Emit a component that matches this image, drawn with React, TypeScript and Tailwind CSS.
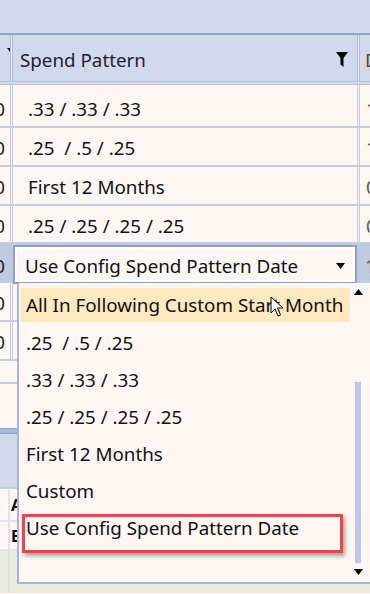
import React from "react";

const font = { fontFamily: '"Noto Sans", "Open Sans", sans-serif' };

function Funnel({ className = "" }: { className?: string }) {
  return (
    <svg viewBox="0 0 12 16" className={className} width="12" height="16">
      <path d="M0 0 H12 L7.5 6 V15 L4.5 12.5 V6 Z" fill="#000" />
    </svg>
  );
}

const rows = [
  { left: "0", text: ".33 / .33 / .33", right: "1", h: "h-[43px]", pt: "pt-[8px]" },
  { left: "0", text: ".25\u00a0\u00a0/ .5 / .25", right: "1", h: "h-[39px]", pt: "pt-[4px]" },
  { left: "0", text: "First 12 Months", right: "0", h: "h-[39px]", pt: "pt-[4px]" },
  { left: "0", text: ".25 / .25 / .25 / .25", right: "0", h: "h-[38px]", pt: "pt-[4px]" },
];

const items = [
  ".25\u00a0\u00a0/ .5 / .25",
  ".33 / .33 / .33",
  ".25 / .25 / .25 / .25",
  "First 12 Months",
  "Custom",
  "Use Config Spend Pattern Date",
];

export default function App() {
  return (
    <div
      className="relative w-[370px] h-[594px] overflow-hidden bg-[#fef6f3] text-[18.8px] text-[#111]"
      style={font}
    >
      {/* top band */}
      <div className="h-[35px] bg-[#d3d9ec] border-b-2 border-[#8ea2cf]" />

      {/* header row */}
      <div className="grid grid-cols-[10px_3px_344px_3px_10px] h-[50px] bg-[#d3d9ec] border-b-[4px] border-double border-[#b3bfdc]">
        <div className="overflow-hidden flex justify-end items-center">
          <Funnel className="shrink-0 mr-[-9px] mb-[4px]" />
        </div>
        <div className="border-x border-[#b3bfdc] bg-[#e4e8f3]" />
        <div className="flex items-center justify-between pl-[7px] pr-[9px] text-[#1b2230]">
          <span className="pt-[5px]">Spend Pattern</span>
          <Funnel className="shrink-0 mt-[4px]" />
        </div>
        <div className="border-x border-[#b3bfdc] bg-[#e4e8f3]" />
        <div className="overflow-hidden flex items-center pl-[5px] text-[#5a4a1a]">
          <span className="shrink-0 pt-[5px]">D</span>
        </div>
      </div>

      {/* data rows */}
      {rows.map((r, i) => (
        <div
          key={i}
          className={`grid grid-cols-[10px_3px_344px_3px_10px] ${r.h} border-b-2 border-[#c3cce1]`}
        >
          <div className={`overflow-hidden flex justify-end items-center pr-[5px] text-[#222] ${r.pt}`}>
            <span className="shrink-0">{r.left}</span>
          </div>
          <div className="border-x border-[#c3cce1]" />
          <div className={`flex items-center pl-[15px] ${r.pt}`}>{r.text}</div>
          <div className="border-x border-[#c3cce1]" />
          <div className={`overflow-hidden flex items-center pl-[6px] text-[#555] ${r.pt}`}>
            <span className="shrink-0">{r.right}</span>
          </div>
        </div>
      ))}

      {/* selected row with editor */}
      <div className="grid grid-cols-[10px_347px_13px] h-[39px] bg-[#c1cbe0]">
        <div className="overflow-hidden flex justify-end items-center pr-[5px] pt-[4px] text-[#222]">
          <span className="shrink-0">0</span>
        </div>
        <div className="pl-[3px] pt-[1px]">
          <div className="h-full border-2 border-[#8ea2cf] bg-white p-[2px]">
            <div className="h-full bg-[#fef6f3] flex items-center justify-between pl-[8px] pr-[8px]">
              <span className="pt-[3px]">Use Config Spend Pattern Date</span>
              <svg width="9" height="6" viewBox="0 0 9 6" className="mt-[2px]">
                <path d="M0 0 H9 L4.5 6 Z" fill="#000" />
              </svg>
            </div>
          </div>
        </div>
        <div className="overflow-hidden flex items-center pl-[8px] pt-[4px] text-[#555]">
          <span className="shrink-0">1</span>
        </div>
      </div>

      {/* rows under dropdown */}
      {[0, 1].map((i) => (
        <div key={i} className="grid grid-cols-[10px_3px_357px] h-[39px] border-b-2 border-[#c3cce1]">
          <div className="overflow-hidden flex justify-end items-center pr-[5px] pt-[4px] text-[#222]">
            <span className="shrink-0">0</span>
          </div>
          <div className="border-x border-[#c3cce1]" />
          <div />
        </div>
      ))}
      <div className="h-[23px] border-b-2 border-[#c3cce1]" />
      <div className="h-[44px]" />
      <div className="h-[6px] bg-[#a9b7da] border-y border-[#8ea2cf]" />
      <div className="h-[55px] bg-[#d3d9ec] border-b-2 border-[#c3cce1]" />
      {[
        { l: "A", h: "h-[33px]" },
        { l: "B", h: "h-[29px]" },
      ].map((r) => (
        <div key={r.l} className={`grid grid-cols-[8px_2px_360px] ${r.h} border-b-2 border-[#dfe3ee]`}>
          <div />
          <div className="bg-[#dfe3ee]" />
          <div className="pl-[1px] flex items-center font-bold text-[16px]">{r.l}</div>
        </div>
      ))}
      <div className="grid grid-cols-[8px_2px_360px] h-[42px] bg-[#e8ecdf]">
        <div />
        <div className="bg-[#dfe3d5]" />
        <div />
      </div>

      {/* dropdown */}
      <div className="absolute left-[17px] top-[283px] w-[360px] h-[301px] bg-[#fef6f3] border-2 border-[#a7b5da] border-t-0">
        <div className="pt-[4px] pl-[2px] pr-[24px]">
          <div className="h-[37px] flex items-start">
            <div className="w-[329px] h-[34px] mt-[1px] bg-[#fde8bf] flex items-center pl-[5px] pt-[1px]">
              All In Following Custom Start Month
            </div>
          </div>
          {items.map((t) => (
            <div key={t} className="h-[37px] flex items-center pl-[5px] pt-[2px]">
              {t}
            </div>
          ))}
        </div>

        {/* scrollbar */}
        <div className="absolute right-[11px] top-0 bottom-0 w-[12px] flex flex-col items-center">
          <svg width="9" height="6" viewBox="0 0 9 6" className="mt-[6px]">
            <path d="M0 6 H9 L4.5 0 Z" fill="#000" />
          </svg>
          <div className="mt-[87px] w-[6px] h-[181px] bg-[#c0c9e0]" />
          <svg width="9" height="6" viewBox="0 0 9 6" className="mt-[6px]">
            <path d="M0 0 H9 L4.5 6 Z" fill="#000" />
          </svg>
        </div>

        {/* highlight box */}
        <div className="absolute left-[3px] top-[231px] w-[321px] h-[39px] border-[3px] border-[#ef4449] shadow-[2px_3px_4px_rgba(0,0,0,0.35)]" />
      </div>

      {/* mouse cursor */}
      <svg
        className="absolute left-[270px] top-[296px]"
        width="14"
        height="22"
        viewBox="0 0 14 22"
      >
        <path
          d="M1 1 V17 L5 13 L8 20 L10.5 19 L7.5 12 H13 Z"
          fill="#fff"
          stroke="#000"
          strokeWidth="1"
          strokeLinejoin="round"
        />
      </svg>
    </div>
  );
}
